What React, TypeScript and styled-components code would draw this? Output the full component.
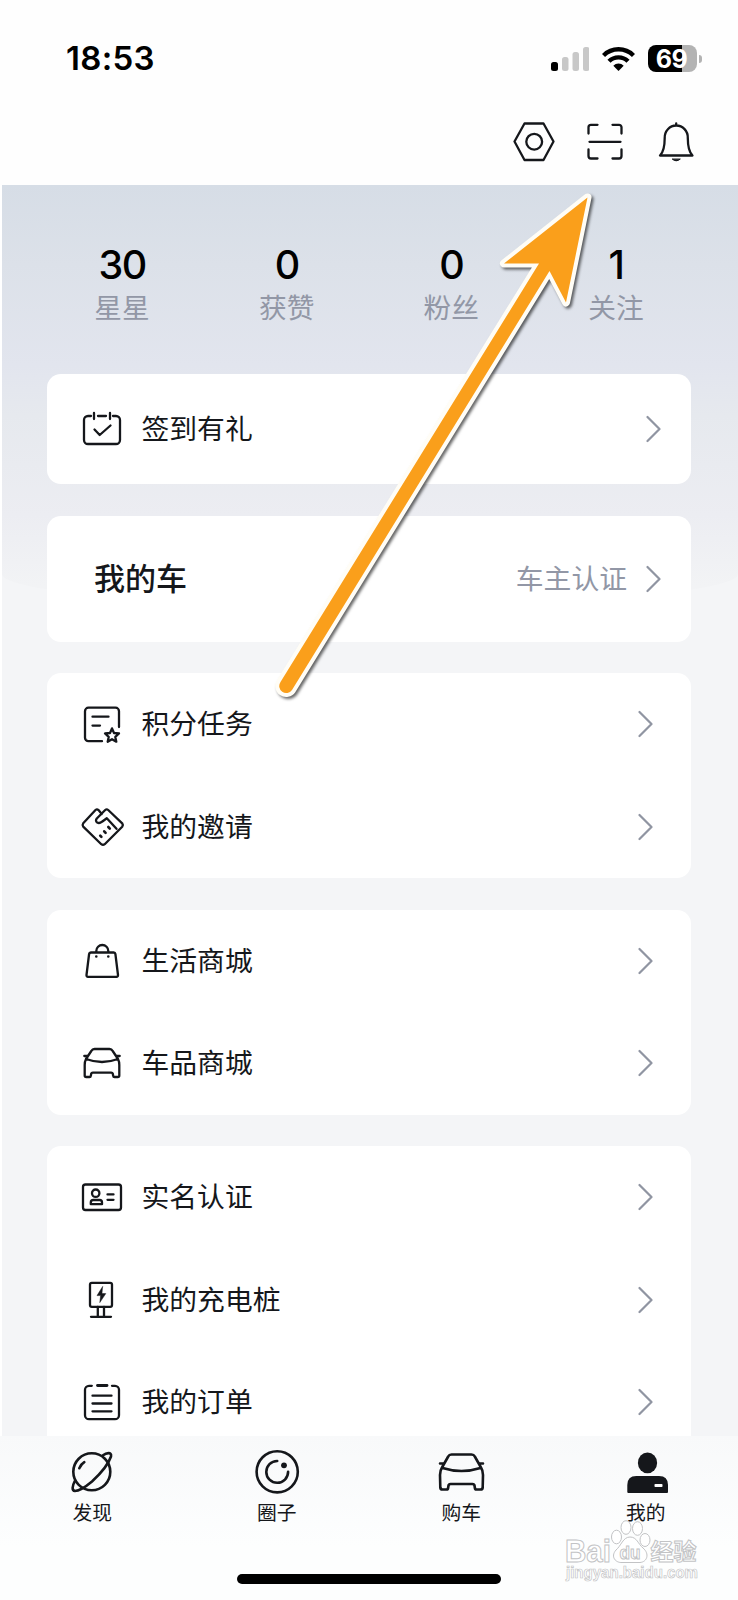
import React from "react";
import styled, { createGlobalStyle } from "styled-components";

const ink = "#15171b";
const muted = "#9297a6";

const GlobalStyle = createGlobalStyle`
  * { box-sizing: border-box; }
  body {
    margin: 0;
    background: #fff;
    font-family: Inter, "Noto Sans CJK SC", sans-serif;
    color: ${ink};
  }
`;

const Screen = styled.div`
  position: relative;
  display: flex;
  flex-direction: column;
  width: 738px;
  height: 1600px;
  overflow: hidden;
  background: #fff;
`;

const Header = styled.header`
  height: 185px;
  flex: none;
  background: #fefefe;
`;

const StatusBar = styled.div`
  display: flex;
  align-items: center;
  justify-content: space-between;
  height: 117px;
  padding: 0 36px 0 66px;
`;

const Clock = styled.div`
  padding-bottom: 1px;
  font-size: 33px;
  font-weight: 600;
  letter-spacing: 0.3px;
  color: #000;
`;

const StatusIcons = styled.div`
  display: flex;
  align-items: center;
  gap: 13px;
`;

const Battery = styled.div`
  display: flex;
  align-items: center;
  gap: 2px;
`;

const BatteryBody = styled.div`
  display: flex;
  align-items: center;
  justify-content: center;
  width: 49px;
  height: 27px;
  padding-right: 2px;
  border-radius: 8px;
  background: linear-gradient(90deg, #000 69%, #b3b3b3 69%);
  color: #fff;
  font-size: 25px;
  font-weight: 700;
  letter-spacing: -0.5px;
`;

const BatteryNub = styled.div`
  width: 3px;
  height: 8px;
  border-radius: 0 4px 4px 0;
  background: #b3b3b3;
`;

const Toolbar = styled.nav`
  display: flex;
  justify-content: flex-end;
  gap: 23px;
  padding: 0 38.5px 0 0;
`;

const Line = styled.svg<{ $size?: number; $weight?: number }>`
  display: block;
  flex: none;
  width: ${(p) => p.$size ?? 48}px;
  height: ${(p) => p.$size ?? 48}px;
  fill: none;
  stroke: ${ink};
  stroke-width: ${(p) => p.$weight ?? 2.3};
  stroke-linecap: round;
  stroke-linejoin: round;
`;

const Content = styled.main`
  position: relative;
  flex: 1;
  min-height: 0;
  margin-left: 2px;
  padding: 0 47px 0 45px;
  overflow: hidden;
  background: #f4f5f7;

  &::before {
    content: "";
    position: absolute;
    top: 0;
    left: 0;
    right: 0;
    height: 421px;
    border-radius: 0 0 50% 50% / 0 0 32px 32px;
    background: linear-gradient(#d6dde6 0, #dce1e9 80px, #e2e5ee 180px, #e6e9ee 230px, #ecedf2 330px, #f2f3f5 400px);
  }
`;

const Stats = styled.section`
  position: relative;
  display: flex;
  justify-content: space-between;
  height: 189px;
  padding: 56px 46px 0 46px;
`;

const Stat = styled.div`
  display: flex;
  flex-direction: column;
  align-items: center;
  width: 58px;
`;

const StatValue = styled.div`
  height: 48px;
  line-height: 48px;
  font-size: 39.5px;
  font-weight: 500;
  letter-spacing: -1.6px;
  color: #000;
`;

const StatLabel = styled.div`
  height: 38px;
  line-height: 38px;
  font-size: 27.7px;
  font-weight: 400;
  color: ${muted};
`;

const Cards = styled.div`
  position: relative;
  display: flex;
  flex-direction: column;
  gap: 31.5px;
`;

const Card = styled.section`
  flex: none;
  border-radius: 14px;
  background: #fff;
`;

const Row = styled.div<{ $height?: number; $inset?: number; $right?: number }>`
  display: flex;
  align-items: center;
  height: ${(p) => p.$height ?? 102.5}px;
  padding: 0 ${(p) => p.$right ?? 38}px 0 ${(p) => p.$inset ?? 31}px;
`;

const RowLabel = styled.span`
  flex: 1;
  margin-left: 15.5px;
  padding-bottom: 4px;
  font-size: 27.8px;
  font-weight: 400;
`;

const RowTitle = styled.span`
  flex: 1;
  padding-bottom: 4px;
  font-size: 31px;
  font-weight: 500;
`;

const RowHint = styled.span`
  margin-right: 19px;
  padding-bottom: 4px;
  font-size: 27.8px;
  font-weight: 400;
  color: ${muted};
`;

const Chevron = () => (
  <svg width="15" height="28" viewBox="0 0 15 28" fill="none" stroke="#9095a2" strokeWidth="2.2" strokeLinecap="round" strokeLinejoin="round">
    <path d="M1.500 2 13.500 14 1.500 26" />
  </svg>
);

const TabBar = styled.nav`
  display: flex;
  flex: none;
  height: 138px;
  background: linear-gradient(#f8f9fa, #fdfefe 110px);
`;

const Tab = styled.div`
  display: flex;
  flex: 1;
  flex-direction: column;
  align-items: center;
  padding-top: 10px;
`;

const TabLabel = styled.span`
  height: 31px;
  line-height: 31px;
  font-size: 19.8px;
  color: ${ink};
`;

const HomeArea = styled.footer`
  display: flex;
  flex: none;
  justify-content: center;
  height: 26px;
  background: #fdfefe;
`;

const HomeIndicator = styled.div`
  width: 264px;
  height: 10px;
  border-radius: 5px;
  background: #000;
`;

const ArrowOverlay = styled.svg`
  position: absolute;
  top: 185px;
  left: 270px;
  overflow: visible;
  filter: drop-shadow(2px 2px 1.5px rgba(0, 0, 0, 0.6));
`;

const Watermark = styled.svg`
  position: absolute;
  left: 560px;
  top: 1518px;
`;

const calendar = (
  <path d="M13 11H10a4 4 0 0 0-4 4v20a4 4 0 0 0 4 4h28a4 4 0 0 0 4-4V15a4 4 0 0 0-4-4h-3M20 11h8M16 8v6M32 8v6M16.500 24.500l5.200 5.500 10.800-9.500" />
);
const task = (
  <>
    <path d="M24 41.200H10.500a3.500 3.500 0 0 1-3.500-3.500V11.200a3.500 3.500 0 0 1 3.500-3.500H37.500a3.500 3.500 0 0 1 3.500 3.500V27M14.500 16.700H30.500M14.500 25.600H22" />
    <path d="m34 28.400 2 4.600 5 .5-3.700 3.400 1 4.800-4.300-2.500-4.300 2.500 1-4.800-3.700-3.400 5-.5z" />
  </>
);
const invite = (
  <>
    <path d="M23.700 11 20.500 7.100Q19 5.700 17.500 7L5.200 20.300Q4 22 5.200 23.600L23.300 41.200Q25 42.600 26.700 41.200L44.200 23.700Q45.500 22 44.200 20.300L30.200 7Q28.700 5.700 27.200 7L18.800 15.500Q17 18 19.200 19.500Q21.500 20.800 24 18.700L28.800 15.200 38.500 25.800" />
    <path d="m22.200 32.600 1.200 1.300M26.200 28.300l1.400 1.500M30.300 24l1.500 1.600" strokeWidth="2.600" />
  </>
);
const bag = (
  <>
    <path d="M12.800 15.500H35.700Q37.200 15.500 37.400 17L40 38Q40.100 39.800 38.500 39.800H10Q8.300 39.800 8.500 38L11.100 17Q11.300 15.500 12.800 15.500ZM18.300 15v-1a6 6 0 0 1 12 0v1" />
    <path d="M18.300 19.500h.01M30.300 19.500h.01" strokeWidth="2.600" />
  </>
);
const car = (
  <path d="M8 20Q6.700 22.500 6.700 26V36.500Q6.700 38 8.200 38H11.500Q12.700 38 12.900 36.500L13.200 34.700Q13.500 33.700 14.800 33.700H33.200Q34.500 33.700 34.800 34.700L35.100 36.500Q35.300 38 36.500 38H39.800Q41.300 38 41.300 36.500V26Q41.300 22.500 40 20L34.700 12Q33.600 10 31.500 10H16.500Q14.400 10 13.300 12ZM8 20Q24 26 40 20M6.300 17H9M39 17h2.700" />
);
const identity = (
  <>
    <rect x="5" y="11.500" width="38" height="25.500" rx="2.500" />
    <circle cx="17.700" cy="20.200" r="3.700" />
    <path d="M12.800 31.200V29.500Q12.800 27 15.300 27H21.600Q24 27 24 29.500V31.200ZM29.500 21.400h6M29.500 26.800h6" />
  </>
);
const charger = (
  <>
    <rect x="12" y="6.800" width="22" height="24" rx="1.800" />
    <path d="M19.800 31v9.500M26 31v9.500M13 40.800H33" />
    <path d="M24.500 10.700 19 19.600H22.600L21.800 26.600 27.800 17.600H24.100Z" fill={ink} strokeWidth=".5" />
  </>
);
const order = (
  <>
    <path d="M13.800 7.800H11A4 4 0 0 0 7 11.800V37.200A4 4 0 0 0 11 41.200H37A4 4 0 0 0 41 37.200V11.800A4 4 0 0 0 37 7.800H34M14.500 17.700H33.500M14.500 25.500H33.500M14.500 33.300H33.500" />
    <path d="M19.500 7.500h9.500" strokeWidth="2.800" />
  </>
);

const groups: { icon: React.ReactNode; label: string }[][] = [
  [
    { icon: task, label: "积分任务" },
    { icon: invite, label: "我的邀请" },
  ],
  [
    { icon: bag, label: "生活商城" },
    { icon: car, label: "车品商城" },
  ],
  [
    { icon: identity, label: "实名认证" },
    { icon: charger, label: "我的充电桩" },
    { icon: order, label: "我的订单" },
  ],
];

const stats = [
  ["30", "星星"],
  ["0", "获赞"],
  ["0", "粉丝"],
  ["1", "关注"],
];

const tabs: { icon: React.ReactNode; label: string }[] = [
  {
    label: "发现",
    icon: (
      <>
        <circle cx="25.800" cy="25.800" r="18.500" />
        <path d="M37 9.300C40 7 46 5.500 45 10.500C42.500 18 33 29 26 35.500C20 40.500 13 45 9 45C5.500 44.700 6.300 40 8.800 35M13.300 22.200Q15 18.200 18.300 16.200" />
      </>
    ),
  },
  {
    label: "圈子",
    icon: (
      <>
        <circle cx="26.200" cy="25.800" r="20.600" />
        <path d="M26.200 15A10.900 10.900 0 1 0 37.100 25.800" />
        <circle cx="33" cy="19.300" r="2.900" fill={ink} stroke="none" />
      </>
    ),
  },
  {
    label: "购车",
    icon: (
      <path d="M7 21.500Q5 24.500 5 29L5.300 41.500Q5.500 43.500 7.500 43.500H11.500Q13 43.500 13.200 41.500L13.500 39.500Q13.700 38 15.500 38H37.500Q39.300 38 39.500 39.500L39.800 41.500Q40 43.500 41.500 43.500H45.500Q47.500 43.500 47.700 41.500L48 29Q48 24.500 46 21.500L39.800 10.500Q38.800 8.500 36.500 8.500H16.500Q14.200 8.500 13.200 10.500ZM7.500 22Q26.500 28 45.500 22M5 17.500H8M45 17.500h3" />
    ),
  },
  {
    label: "我的",
    icon: (
      <g stroke="none" fill={ink}>
        <ellipse cx="27.500" cy="16.900" rx="9.600" ry="10.300" />
        <path d="M7.300 46V39Q7.300 30 16.300 30H39Q48 30 48 39V46Q48 47 47 47H8.300Q7.300 47 7.300 46Z" />
        <rect x="34.500" y="38" width="8" height="3" rx=".8" fill="#fff" />
      </g>
    ),
  },
];

export default function App() {
  return (
    <Screen>
      <GlobalStyle />
      <Header>
        <StatusBar>
          <Clock>18:53</Clock>
          <StatusIcons>
            <svg width="38.500" height="26" viewBox="0 0 38.500 26">
              <rect x="0" y="16" width="7" height="9" rx="2.500" />
              <rect x="11" y="11" width="6.500" height="14" rx="2.500" fill="#c8c8c8" />
              <rect x="21.500" y="6" width="6.500" height="19" rx="2.500" fill="#c8c8c8" />
              <rect x="32" y="1" width="6.500" height="24" rx="2.500" fill="#c8c8c8" />
            </svg>
            <svg width="33" height="26" viewBox="0 0 33 26" fill="none" stroke="#000" strokeWidth="4.400">
              <path d="M1.500 9.500a21.300 21.300 0 0 1 30 0M7 15.300a13.500 13.500 0 0 1 19 0" />
              <path d="M16.500 25 11.300 19.700a7.500 7.500 0 0 1 10.400 0Z" fill="#000" stroke="none" />
            </svg>
            <Battery>
              <BatteryBody>69</BatteryBody>
              <BatteryNub />
            </Battery>
          </StatusIcons>
        </StatusBar>
        <Toolbar>
          <Line viewBox="0 0 48 48">
            <path d="M14.500 6.500H33.500L43.500 24.500 33.500 43H14.500L4.500 24.500Z" />
            <circle cx="24.200" cy="24.700" r="7.900" />
          </Line>
          <Line viewBox="0 0 48 48">
            <path d="M16.500 7.800H10A2.500 2.500 0 0 0 7.500 10.300V16.500M31.500 7.800H38A2.500 2.500 0 0 1 40.500 10.300V16.500M7.500 32.500V39A2.500 2.500 0 0 0 10 41.500H16.500M40.500 32.500V39A2.500 2.500 0 0 1 38 41.500H31.500M8.500 24.800H39.500" />
          </Line>
          <Line viewBox="0 0 48 48">
            <path d="M8 38.500H40.500Q35.800 34 35.800 21A11.500 12 0 0 0 24.200 8.500A11.500 12 0 0 0 12.700 21Q12.700 34 8 38.500ZM24.200 8.500V6.500" />
            <path d="M20.500 42.300Q24.200 45.500 28 42.300Z" fill={ink} strokeWidth="1" />
          </Line>
        </Toolbar>
      </Header>

      <Content>
        <Stats>
          {stats.map(([value, label]) => (
            <Stat key={label}>
              <StatValue>{value}</StatValue>
              <StatLabel>{label}</StatLabel>
            </Stat>
          ))}
        </Stats>
        <Cards>
          <Card>
            <Row $height={110} $right={30}>
              <Line viewBox="0 0 48 48">{calendar}</Line>
              <RowLabel>签到有礼</RowLabel>
              <Chevron />
            </Row>
          </Card>
          <Card>
            <Row $height={126} $inset={47} $right={30}>
              <RowTitle>我的车</RowTitle>
              <RowHint>车主认证</RowHint>
              <Chevron />
            </Row>
          </Card>
          {groups.map((rows) => (
            <Card key={rows[0].label}>
              {rows.map(({ icon, label }) => (
                <Row key={label}>
                  <Line viewBox="0 0 48 48">{icon}</Line>
                  <RowLabel>{label}</RowLabel>
                  <Chevron />
                </Row>
              ))}
            </Card>
          ))}
        </Cards>
      </Content>

      <TabBar>
        {tabs.map(({ icon, label }) => (
          <Tab key={label}>
            <Line $size={52} $weight={2.6} viewBox="0 0 52 52">{icon}</Line>
            <TabLabel>{label}</TabLabel>
          </Tab>
        ))}
      </TabBar>
      <HomeArea>
        <HomeIndicator />
      </HomeArea>

      <ArrowOverlay width="330" height="520" viewBox="270 185 330 520" strokeLinejoin="round">
        <path
          d="M587.500 197.500 504 263.500 539 263.500 280.500 682A6.500 6.500 0 0 0 292 690L549.500 271 566 302.500Z"
          fill="#fa9f1b"
          stroke="#fffdf6"
          strokeWidth="8"
          paintOrder="stroke"
        />
      </ArrowOverlay>

      <Watermark width="150" height="68" viewBox="560 1518 150 68" fill="#fff" stroke="#c2c3c5" strokeWidth="1" fontFamily="Liberation Sans, sans-serif" fontWeight="700">
        <text x="565" y="1562" fontSize="31" textLength="46" lengthAdjust="spacingAndGlyphs">Bai</text>
        <ellipse cx="616.500" cy="1537" rx="5" ry="6.800" />
        <ellipse cx="626" cy="1527.500" rx="5" ry="6.800" />
        <ellipse cx="637.500" cy="1528.500" rx="5" ry="6.800" />
        <ellipse cx="645" cy="1540" rx="5" ry="6.500" />
        <path d="M630 1537C623 1537 621 1546 616 1550C610 1557 616 1563 622 1562.500H640C647 1562 650 1554 643 1548C638 1544 637 1537 630 1537Z" />
        <text x="619.500" y="1558.500" fontSize="18" textLength="21" lengthAdjust="spacingAndGlyphs">du</text>
        <text x="650.500" y="1560" fontSize="23" fontFamily="Noto Sans CJK SC, sans-serif">经验</text>
        <text x="566" y="1578" fontSize="16.500" strokeWidth=".7" textLength="132" lengthAdjust="spacingAndGlyphs">jingyan.baidu.com</text>
      </Watermark>
    </Screen>
  );
}
